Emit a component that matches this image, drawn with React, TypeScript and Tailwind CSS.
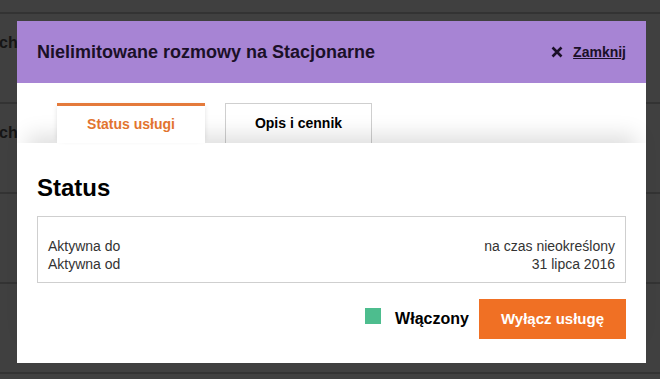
const rows = [
  { id: 1, label: "ch" },
  { id: 2, label: "ch" },
  { id: 3, label: "" },
  { id: 4, label: "" },
];

const CloseIcon = () => (
  <svg width="12" height="12" viewBox="0 0 12 12" className="text-[#1b1028]">
    <path d="M1.5 1.5 L10.5 10.5 M10.5 1.5 L1.5 10.5" stroke="currentColor" strokeWidth="2.6" />
  </svg>
);

const App = () => {
  return (
    <div className="relative h-[379px] w-[660px] overflow-hidden bg-[#404040] font-['Liberation_Sans',Arial,sans-serif]">
      {/* page behind the overlay */}
      <div className="flex flex-col">
        <div className="h-[14px] border-b-2 border-[#333]" />
        {rows.map((r) => (
          <div key={r.id} className="h-[90px] border-b-2 border-[#333] pt-[19px]">
            <p className="ml-[-1px] text-[16px] leading-[20px] font-bold text-[#151515]">{r.label}</p>
          </div>
        ))}
      </div>

      <div className="absolute left-[17px] top-[21px] w-[629px] bg-white">
        <div className="flex h-[62px] items-center justify-between bg-[#a784d4] px-5">
          <p className="text-[18px] font-bold text-[#1b1028]">Nielimitowane rozmowy na Stacjonarne</p>
          <button className="flex items-center gap-[10px]">
            <CloseIcon />
            <span className="text-[14px] font-bold text-[#1b1028] underline">Zamknij</span>
          </button>
        </div>

        <div className="flex h-[60px] items-end gap-5 px-10">
          <div className="relative z-10 flex h-[40px] w-[148px] items-center justify-center border-t-[3px] border-[#e47a3b] bg-white pb-[1px] shadow-[-3px_0_5px_-3px_rgba(0,0,0,0.12),3px_0_5px_-3px_rgba(0,0,0,0.12)]">
            <span className="text-[14px] font-bold text-[#e2742f]">Status usługi</span>
          </div>
          <div className="flex h-[40px] w-[147px] items-center justify-center border border-b-0 border-[#cfcfcf]">
            <span className="text-[14px] font-bold text-black">Opis i cennik</span>
          </div>
        </div>

        <div className="relative bg-white px-5 pt-[31px] pb-6 shadow-[0_-18px_20px_-10px_rgba(0,0,0,0.13)]">
          <h2 className="text-[24px] leading-[28px] font-bold text-black">Status</h2>
          <div className="mt-[14px] border border-[#cfcfcf] px-[10px] pt-5 pb-[9px] text-[14px] leading-[18px] text-[#333]">
            <div className="flex justify-between">
              <span>Aktywna do</span>
              <span>na czas nieokreślony</span>
            </div>
            <div className="flex justify-between">
              <span>Aktywna od</span>
              <span>31 lipca 2016</span>
            </div>
          </div>
          <div className="mt-4 flex items-center justify-end">
            <div className="mb-[6px] h-4 w-4 bg-[#4dbd8e]" />
            <span className="ml-[14px] text-[16px] font-bold text-black">Włączony</span>
            <button className="ml-[10px] h-[40px] bg-[#f07024] px-[22px] text-[15px] font-bold text-white">
              Wyłącz usługę
            </button>
          </div>
        </div>
      </div>
    </div>
  );
};

export default App;
